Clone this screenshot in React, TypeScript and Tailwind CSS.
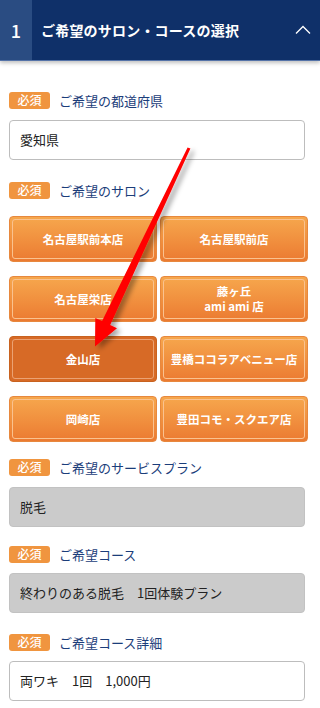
import React from "react";

// ── Data ────────────────────────────────────────────────────────────────────

const salons: { label: React.ReactNode; selected?: boolean }[] = [
  { label: "名古屋駅前本店" },
  { label: "名古屋駅前店" },
  { label: "名古屋栄店" },
  {
    label: (
      <>
        藤ヶ丘
        <br />
        ami ami 店
      </>
    ),
  },
  { label: "金山店", selected: true },
  { label: "豊橋ココラアベニュー店" },
  { label: "岡崎店" },
  { label: "豊田コモ・スクエア店" },
];

const font = "font-['Noto_Sans_CJK_JP','Noto_Sans',sans-serif]";

// ── Parts ───────────────────────────────────────────────────────────────────

function Label({ children }: { children: React.ReactNode }) {
  return (
    <div className="flex items-center gap-[9px] h-[18px]">
      <span className="flex h-[17px] w-[41px] items-center justify-center rounded-[3px] bg-[#f0953f] text-[12px] font-medium leading-none text-white">
        必須
      </span>
      <span className="text-[13px] leading-none text-[#1b3d7a]">{children}</span>
    </div>
  );
}

function Field({ value, disabled }: { value: string; disabled?: boolean }) {
  return (
    <div
      className={`flex h-10 items-center rounded-[4px] border px-[10px] text-[13px] text-[#222] ${
        disabled ? "border-[#c2c2c2] bg-[#cbcbcb]" : "border-[#bdbdbd] bg-white"
      }`}
    >
      {value}
    </div>
  );
}

function SalonButton({ label, selected }: { label: React.ReactNode; selected?: boolean }) {
  return (
    <button
      className={`h-[46px] rounded-[4px] border p-[2px] ${
        selected
          ? "border-[#c8621f] bg-[#d76a26]"
          : "border-[#e7883e] bg-gradient-to-b from-[#f6a74d] to-[#eb7a31]"
      }`}
    >
      <div
        className={`flex h-full items-center justify-center rounded-[3px] border text-center text-[11.5px] font-bold leading-[15px] text-white ${
          selected ? "border-[#eba273]" : "border-[#fac28f]"
        }`}
      >
        <span>{label}</span>
      </div>
    </button>
  );
}

function Arrow() {
  return (
    <svg
      className="pointer-events-none absolute left-0 top-0"
      width="320"
      height="708"
      viewBox="0 0 320 708"
    >
      <defs>
        <filter id="sh" x="-20%" y="-20%" width="140%" height="140%">
          <feDropShadow dx="4" dy="3" stdDeviation="2.5" floodColor="#000" floodOpacity="0.35" />
        </filter>
      </defs>
      <polygon
        filter="url(#sh)"
        fill="#ff0000"
        points="190.4,148.6 187.6,147.4 102.1,321.1 95.3,317.9 95,346.5 117,328.2 110.2,324.9"
      />
    </svg>
  );
}

// ── App ─────────────────────────────────────────────────────────────────────

export default function App() {
  return (
    <div className={`relative h-[708px] w-[320px] overflow-hidden bg-white ${font}`}>
      {/* Section header */}
      <div className="flex h-[61px] items-stretch border-b border-[#5573a8] bg-[#0f3069] shadow-[0_2px_4px_rgba(0,0,0,0.25)]">
        <div className="flex w-8 items-center justify-center bg-[#2a4c82] text-[18px] font-medium text-white">
          1
        </div>
        <div className="flex flex-1 items-center pl-[9px] text-[14px] font-bold tracking-[0.2px] text-white">
          ご希望のサロン・コースの選択
        </div>
        <div className="flex items-center pr-[9px]">
          <svg width="16" height="10" viewBox="0 0 16 10">
            <polyline points="1,8.5 8,1.5 15,8.5" fill="none" stroke="#fff" strokeWidth="1.3" />
          </svg>
        </div>
      </div>

      <div className="pl-[9px] pr-[15px] pt-[30px]">
        <Label>ご希望の都道府県</Label>
        <div className="mt-[11px]">
          <Field value="愛知県" />
        </div>

        <div className="mt-[21px]">
          <Label>ご希望のサロン</Label>
        </div>
        <div className="-mr-[3px] mt-[17px] grid grid-cols-2 gap-x-[3px] gap-y-[14px]">
          {salons.map((s, i) => (
            <SalonButton key={i} label={s.label} selected={s.selected} />
          ))}
        </div>

        <div className="mt-[16px]">
          <Label>ご希望のサービスプラン</Label>
        </div>
        <div className="mt-[11px]">
          <Field value="脱毛" disabled />
        </div>

        <div className="mt-[18px]">
          <Label>ご希望コース</Label>
        </div>
        <div className="mt-[10px]">
          <Field value="終わりのある脱毛　1回体験プラン" disabled />
        </div>

        <div className="mt-[20px]">
          <Label>ご希望コース詳細</Label>
        </div>
        <div className="mt-[10px]">
          <Field value="両ワキ　1回　1,000円" />
        </div>
      </div>

      <Arrow />
    </div>
  );
}
